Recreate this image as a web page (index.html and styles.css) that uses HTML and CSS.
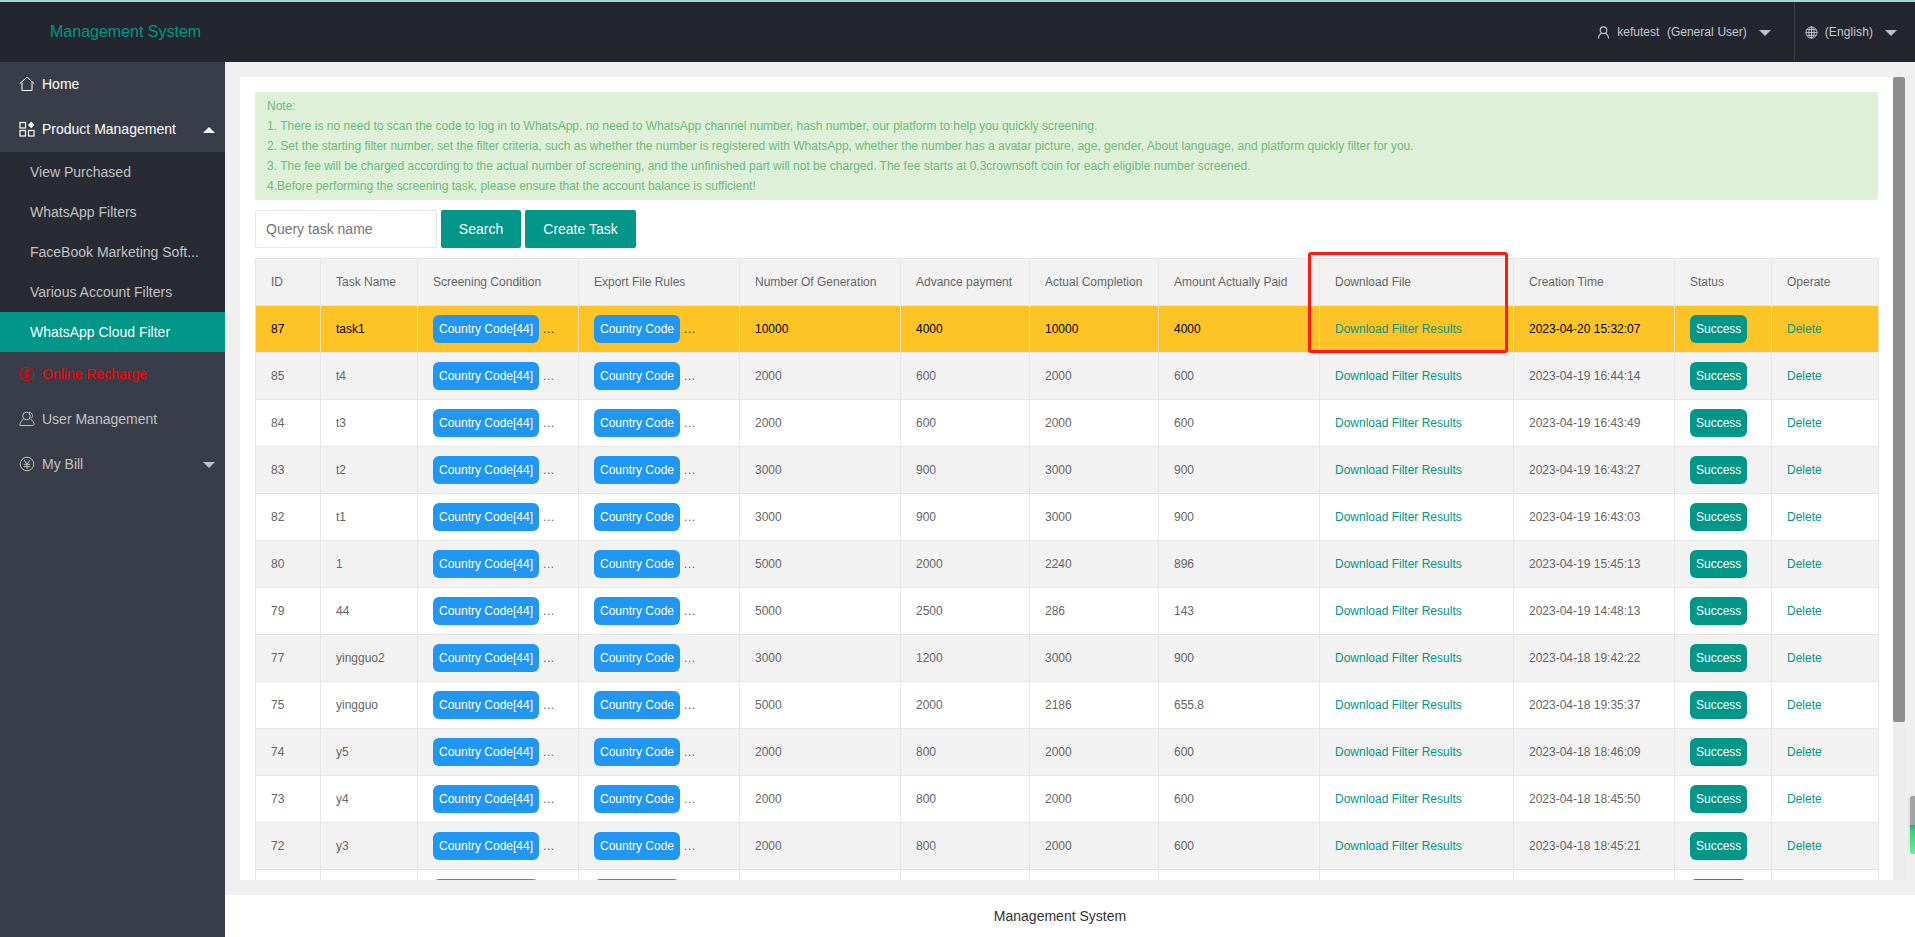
FILE: index.html
```html
<!DOCTYPE html>
<html>

<head>
    <title>Management System</title>
    <meta charset="UTF-8">
    <link rel="stylesheet" href="styles.css">
</head>

<body>
    <div class="header">
        <div class="logo">Management System</div>
        <div class="header-right">
            <div class="user-nav">
                <svg class="head-icon" viewBox="0 0 14 14" fill="none" stroke="#c8c9cc" stroke-width="1.2"><circle cx="7" cy="4.5" r="3.6"/><path d="M1.5 13.5c.3-3.2 2-5 3.6-5.6M12.5 13.5c-.3-3.2-2-5-3.6-5.6"/></svg>
                <span class="user-name">kefutest&nbsp; (General User)</span>
                <i class="caret caret-down"></i>
            </div>
            <div class="lang-nav">
                <svg class="head-icon" viewBox="0 0 14 14" fill="none" stroke="#c8c9cc" stroke-width="1"><circle cx="7" cy="7" r="6"/><ellipse cx="7" cy="7" rx="2.8" ry="6"/><path d="M1 7h12M1.8 4h10.4M1.8 10h10.4M7 1v12"/></svg>
                <span class="lang-name">(English)</span>
                <i class="caret caret-down"></i>
            </div>
        </div>
    </div>

    <div class="layout">
        <div class="sidebar">
            <a class="nav-item nav-home">
                <svg class="nav-icon" viewBox="0 0 16 16" fill="none" stroke="currentColor" stroke-width="1"><path d="M.8 7.6 8 1.2l7.2 6.4M3 6.5v8h10v-8"/></svg>
                Home
            </a>
            <a class="nav-item nav-home">
                <svg class="nav-icon" viewBox="0 0 16 16" fill="none" stroke="currentColor" stroke-width="1.2"><rect x="1" y="1.5" width="5.5" height="5.5"/><rect x="1" y="9.5" width="5.5" height="5.5"/><rect x="9.5" y="9.5" width="5.5" height="5.5"/><path fill="currentColor" stroke="none" d="M12.2 .6l3.2 3.3-3.2 3.3-3.2-3.3z"/></svg>
                Product Management
                <i class="caret caret-up"></i>
            </a>
            <div class="sub-nav">
                <a>View Purchased</a>
                <a>WhatsApp Filters</a>
                <a>FaceBook Marketing Soft...</a>
                <a>Various Account Filters</a>
                <a class="active">WhatsApp Cloud Filter</a>
            </div>
            <a class="nav-item nav-red">
                <svg class="nav-icon" viewBox="0 0 16 16" fill="none" stroke="currentColor" stroke-width="1"><circle cx="8" cy="8" r="6.8"/><path d="M10.4 5.6C9.6 4.3 5.8 4.2 5.8 6.2c0 2.200 4.600 1.300 4.600 3.600 0 2-3.900 1.900-4.800.4M8 3v10"/></svg>
                Online Recharge
            </a>
            <a class="nav-item">
                <svg class="nav-icon" viewBox="0 0 16 16" fill="none" stroke="currentColor" stroke-width="1"><circle cx="7.500" cy="5" r="3.800"/><path d="M4.500 8C2.500 9.500 1 12 .8 14.500h11.500c1.200 0 2.700-.2 2.900-1-.2-2-1.500-4-3.500-5.200"/><path d="M10 1.400c2 0 3.500 1.300 3.500 3.200 0 1.500-.8 2.500-2 3.200"/></svg>
                User Management
            </a>
            <a class="nav-item">
                <svg class="nav-icon" viewBox="0 0 16 16" fill="none" stroke="currentColor" stroke-width="1"><circle cx="8" cy="8" r="6.800"/><path d="M5 4l3 4 3-4M4.800 8.300h6.400M4.800 10.600h6.400M8 8v5"/></svg>
                My Bill
                <i class="caret caret-down"></i>
            </a>
        </div>

        <div class="main">
            <div class="content-wrap">
                <div class="card">
                    <div class="note">
                        <p>Note:</p>
                        <p>1. There is no need to scan the code to log in to WhatsApp, no need to WhatsApp channel number, hash number, our platform to help you quickly screening.</p>
                        <p>2. Set the starting filter number, set the filter criteria, such as whether the number is registered with WhatsApp, whether the number has a avatar picture, age, gender, About language, and platform quickly filter for you.</p>
                        <p>3. The fee will be charged according to the actual number of screening, and the unfinished part will not be charged. The fee starts at 0.3crownsoft coin for each eligible number screened.</p>
                        <p>4.Before performing the screening task, please ensure that the account balance is sufficient!</p>
                    </div>

                    <div class="toolbar">
                        <input class="search-input" type="text" placeholder="Query task name">
                        <button class="btn btn-search">Search</button>
                        <button class="btn btn-create">Create Task</button>
                    </div>

                    <div class="table-wrap">
                        <table class="task-table">
                            <colgroup>
                                <col class="c-id"><col class="c-name"><col class="c-cond"><col class="c-rule">
                                <col class="c-num"><col class="c-adv"><col class="c-act"><col class="c-paid">
                                <col class="c-file"><col class="c-time"><col class="c-status"><col class="c-op">
                            </colgroup>
                            <thead>
                                <tr>
                                    <th>ID</th><th>Task Name</th><th>Screening Condition</th><th>Export File Rules</th>
                                    <th>Number Of Generation</th><th>Advance payment</th><th>Actual Completion</th><th>Amount Actually Paid</th>
                                    <th>Download File</th><th>Creation Time</th><th>Status</th><th>Operate</th>
                                </tr>
                            </thead>
                            <tbody>
                                <tr class="row-hot">
                                    <td>87</td><td>task1</td>
                                    <td><span class="pill">Country Code[44]</span><span class="more">...</span></td>
                                    <td><span class="pill">Country Code</span><span class="more">...</span></td>
                                    <td>10000</td><td>4000</td><td>10000</td><td>4000</td>
                                    <td><a class="link">Download Filter Results</a></td><td>2023-04-20 15:32:07</td>
                                    <td><span class="badge">Success</span></td><td><a class="link">Delete</a></td>
                                </tr>
                                <tr>
                                    <td>85</td><td>t4</td>
                                    <td><span class="pill">Country Code[44]</span><span class="more">...</span></td>
                                    <td><span class="pill">Country Code</span><span class="more">...</span></td>
                                    <td>2000</td><td>600</td><td>2000</td><td>600</td>
                                    <td><a class="link">Download Filter Results</a></td><td>2023-04-19 16:44:14</td>
                                    <td><span class="badge">Success</span></td><td><a class="link">Delete</a></td>
                                </tr>
                                <tr>
                                    <td>84</td><td>t3</td>
                                    <td><span class="pill">Country Code[44]</span><span class="more">...</span></td>
                                    <td><span class="pill">Country Code</span><span class="more">...</span></td>
                                    <td>2000</td><td>600</td><td>2000</td><td>600</td>
                                    <td><a class="link">Download Filter Results</a></td><td>2023-04-19 16:43:49</td>
                                    <td><span class="badge">Success</span></td><td><a class="link">Delete</a></td>
                                </tr>
                                <tr>
                                    <td>83</td><td>t2</td>
                                    <td><span class="pill">Country Code[44]</span><span class="more">...</span></td>
                                    <td><span class="pill">Country Code</span><span class="more">...</span></td>
                                    <td>3000</td><td>900</td><td>3000</td><td>900</td>
                                    <td><a class="link">Download Filter Results</a></td><td>2023-04-19 16:43:27</td>
                                    <td><span class="badge">Success</span></td><td><a class="link">Delete</a></td>
                                </tr>
                                <tr>
                                    <td>82</td><td>t1</td>
                                    <td><span class="pill">Country Code[44]</span><span class="more">...</span></td>
                                    <td><span class="pill">Country Code</span><span class="more">...</span></td>
                                    <td>3000</td><td>900</td><td>3000</td><td>900</td>
                                    <td><a class="link">Download Filter Results</a></td><td>2023-04-19 16:43:03</td>
                                    <td><span class="badge">Success</span></td><td><a class="link">Delete</a></td>
                                </tr>
                                <tr>
                                    <td>80</td><td>1</td>
                                    <td><span class="pill">Country Code[44]</span><span class="more">...</span></td>
                                    <td><span class="pill">Country Code</span><span class="more">...</span></td>
                                    <td>5000</td><td>2000</td><td>2240</td><td>896</td>
                                    <td><a class="link">Download Filter Results</a></td><td>2023-04-19 15:45:13</td>
                                    <td><span class="badge">Success</span></td><td><a class="link">Delete</a></td>
                                </tr>
                                <tr>
                                    <td>79</td><td>44</td>
                                    <td><span class="pill">Country Code[44]</span><span class="more">...</span></td>
                                    <td><span class="pill">Country Code</span><span class="more">...</span></td>
                                    <td>5000</td><td>2500</td><td>286</td><td>143</td>
                                    <td><a class="link">Download Filter Results</a></td><td>2023-04-19 14:48:13</td>
                                    <td><span class="badge">Success</span></td><td><a class="link">Delete</a></td>
                                </tr>
                                <tr>
                                    <td>77</td><td>yingguo2</td>
                                    <td><span class="pill">Country Code[44]</span><span class="more">...</span></td>
                                    <td><span class="pill">Country Code</span><span class="more">...</span></td>
                                    <td>3000</td><td>1200</td><td>3000</td><td>900</td>
                                    <td><a class="link">Download Filter Results</a></td><td>2023-04-18 19:42:22</td>
                                    <td><span class="badge">Success</span></td><td><a class="link">Delete</a></td>
                                </tr>
                                <tr>
                                    <td>75</td><td>yingguo</td>
                                    <td><span class="pill">Country Code[44]</span><span class="more">...</span></td>
                                    <td><span class="pill">Country Code</span><span class="more">...</span></td>
                                    <td>5000</td><td>2000</td><td>2186</td><td>655.8</td>
                                    <td><a class="link">Download Filter Results</a></td><td>2023-04-18 19:35:37</td>
                                    <td><span class="badge">Success</span></td><td><a class="link">Delete</a></td>
                                </tr>
                                <tr>
                                    <td>74</td><td>y5</td>
                                    <td><span class="pill">Country Code[44]</span><span class="more">...</span></td>
                                    <td><span class="pill">Country Code</span><span class="more">...</span></td>
                                    <td>2000</td><td>800</td><td>2000</td><td>600</td>
                                    <td><a class="link">Download Filter Results</a></td><td>2023-04-18 18:46:09</td>
                                    <td><span class="badge">Success</span></td><td><a class="link">Delete</a></td>
                                </tr>
                                <tr>
                                    <td>73</td><td>y4</td>
                                    <td><span class="pill">Country Code[44]</span><span class="more">...</span></td>
                                    <td><span class="pill">Country Code</span><span class="more">...</span></td>
                                    <td>2000</td><td>800</td><td>2000</td><td>600</td>
                                    <td><a class="link">Download Filter Results</a></td><td>2023-04-18 18:45:50</td>
                                    <td><span class="badge">Success</span></td><td><a class="link">Delete</a></td>
                                </tr>
                                <tr>
                                    <td>72</td><td>y3</td>
                                    <td><span class="pill">Country Code[44]</span><span class="more">...</span></td>
                                    <td><span class="pill">Country Code</span><span class="more">...</span></td>
                                    <td>2000</td><td>800</td><td>2000</td><td>600</td>
                                    <td><a class="link">Download Filter Results</a></td><td>2023-04-18 18:45:21</td>
                                    <td><span class="badge">Success</span></td><td><a class="link">Delete</a></td>
                                </tr>
                                <tr>
                                    <td></td><td></td>
                                    <td><span class="pill pill-clip"></span></td>
                                    <td><span class="pill pill-clip pill-short"></span></td>
                                    <td></td><td></td><td></td><td></td>
                                    <td></td><td></td>
                                    <td><span class="badge badge-clip"></span></td><td></td>
                                </tr>
                            </tbody>
                        </table>
                        <div class="mark-box"></div>
                    </div>
                </div>
                <div class="scroll-track"><div class="scroll-thumb"></div></div>
            </div>
            <div class="footer">Management System</div>
        </div>
    </div>

    <div class="side-widget"></div>
</body>

</html>
```
FILE: styles.css
```css
* {
    margin: 0;
    padding: 0;
    box-sizing: border-box;
}

html, body {
    height: 100%;
    overflow: hidden;
}

body {
    font-family: "Liberation Sans", Arial, sans-serif;
    font-size: 14px;
    color: #666;
    background: #f0f0f0;
    display: flex;
    flex-direction: column;
}

a {
    text-decoration: none;
}

.header {
    height: 62px;
    flex-shrink: 0;
    background: #23262e;
    border-top: 2px solid #a5d8d4;
    display: flex;
    justify-content: space-between;
    align-items: stretch;
}

.logo {
    padding-left: 50px;
    font-size: 16px;
    line-height: 60px;
    color: #009688;
}

.header-right {
    display: flex;
    font-size: 12px;
    color: #c8c9cc;
}

.user-nav, .lang-nav {
    display: flex;
    align-items: center;
}

.user-nav {
    padding-right: 23px;
}

.user-name {
    word-spacing: 0.5px;
}

.lang-name {
    letter-spacing: 0.1px;
}

.lang-nav {
    padding: 0 18px 0 9px;
    border-left: 1px solid #3a3d45;
}

.head-icon {
    width: 13px;
    height: 13px;
    margin-right: 7px;
}

.lang-nav .head-icon {
    margin-left: 1px;
}

.caret {
    display: inline-block;
    width: 0;
    height: 0;
    border-left: 6px solid transparent;
    border-right: 6px solid transparent;
}

.caret-down {
    border-top: 6px solid #c2c2c2;
}

.caret-up {
    border-bottom: 6px solid #fff;
}

.user-nav .caret, .lang-nav .caret {
    margin-left: 12px;
    margin-top: 2px;
}

.layout {
    flex: 1;
    min-height: 0;
    display: flex;
}

.sidebar {
    width: 225px;
    flex-shrink: 0;
    background: #393d49;
    color: #c2c2c2;
}

.nav-item {
    position: relative;
    height: 45px;
    padding: 0 0 2px 19px;
    display: flex;
    align-items: center;
    color: #c2c2c2;
}

.nav-home {
    color: #fff;
}

.nav-red {
    color: #ff0000;
}

.nav-icon {
    width: 16px;
    height: 16px;
    margin-right: 7px;
}

.nav-item .caret {
    position: absolute;
    right: 10px;
    top: 20px;
}

.sub-nav {
    background: #282b33;
}

.sub-nav a {
    display: block;
    height: 40px;
    line-height: 40px;
    padding-left: 30px;
    color: #c2c2c2;
}

.sub-nav a.active {
    background: #009688;
    color: #fff;
}

.main {
    flex: 1;
    min-width: 0;
    display: flex;
    flex-direction: column;
}

.content-wrap {
    flex: 1;
    min-height: 0;
    display: flex;
    padding: 15px 10px 15px 15px;
}

.card {
    flex: 1;
    min-width: 0;
    background: #fff;
    overflow: hidden;
    padding: 15px;
}

.scroll-track {
    width: 12px;
    flex-shrink: 0;
    background: #ececec;
    border-radius: 2px;
}

.scroll-thumb {
    height: 645px;
    background: #8f8e8e;
    border-radius: 2px;
}

.footer {
    height: 42px;
    flex-shrink: 0;
    padding-right: 20px;
    background: #fff;
    text-align: center;
    line-height: 42px;
    color: #333;
}

.note {
    height: 108px;
    padding: 4px 12px;
    background: #dff0d8;
    border-radius: 2px;
    font-size: 12px;
    line-height: 20px;
    color: #6cb97e;
}

.toolbar {
    display: flex;
    gap: 4px;
    margin-top: 10px;
    height: 38px;
}

.search-input {
    width: 182px;
    height: 38px;
    padding-left: 10px;
    border: 1px solid #e6e6e6;
    border-radius: 2px;
    font-family: inherit;
    font-size: 14px;
    color: #666;
    outline: none;
}

.search-input::placeholder {
    color: #757575;
}

.btn {
    height: 38px;
    background: #009688;
    color: #fff;
    border: none;
    border-radius: 2px;
    font-family: inherit;
    font-size: 14px;
}

.btn-search {
    width: 80px;
}

.btn-create {
    width: 111px;
}

.table-wrap {
    position: relative;
    margin-top: 10px;
}

.task-table {
    width: 1623px;
    table-layout: fixed;
    border-collapse: collapse;
    font-size: 12px;
    color: #666;
}

.c-id { width: 65px; }
.c-name { width: 97px; }
.c-cond { width: 161px; }
.c-rule { width: 161px; }
.c-num { width: 161px; }
.c-adv { width: 129px; }
.c-act { width: 129px; }
.c-paid { width: 161px; }
.c-file { width: 194px; }
.c-time { width: 161px; }
.c-status { width: 97px; }
.c-op { width: 107px; }

.task-table th, .task-table td {
    height: 47px;
    padding: 0 15px;
    border: 1px solid #e6e6e6;
    text-align: left;
    font-weight: 400;
    white-space: nowrap;
    overflow: hidden;
}

.task-table th {
    background: #f2f2f2;
}

.task-table tbody tr:nth-child(even) {
    background: #f2f2f2;
}

.task-table tbody tr.row-hot {
    background: #fec425;
    color: #000;
}

.task-table tbody tr.row-hot td {
    border-left-color: #f7e3ad;
    border-right-color: #f7e3ad;
}

.pill, .badge {
    display: inline-block;
    height: 28px;
    line-height: 28px;
    padding: 0 6px;
    border-radius: 6px;
    color: #fff;
    vertical-align: middle;
}

.pill {
    background: #2196f3;
}

.badge {
    background: #009688;
}

.pill-clip {
    width: 106px;
}

.pill-short {
    width: 86px;
}

.badge-clip {
    width: 57px;
}

.more {
    margin-left: 4px;
    vertical-align: middle;
    letter-spacing: 0.5px;
}

.row-hot .more {
    color: #333;
}

.link {
    color: #009688;
}

.mark-box {
    position: absolute;
    left: 1053px;
    top: -6px;
    width: 200px;
    height: 101px;
    border: 3px solid #ff1a0d;
    border-radius: 3px;
}

.side-widget {
    position: absolute;
    right: 0;
    top: 796px;
    width: 5px;
    height: 58px;
    border-radius: 3px 0 0 3px;
    background: linear-gradient(#a3a3a3 0, #a3a3a3 50%, #1fb36a 50%, #2fd47c 60%, #6ff08f 100%);
    box-shadow: 0 0 4px rgba(0,0,0,0.15);
}
```
